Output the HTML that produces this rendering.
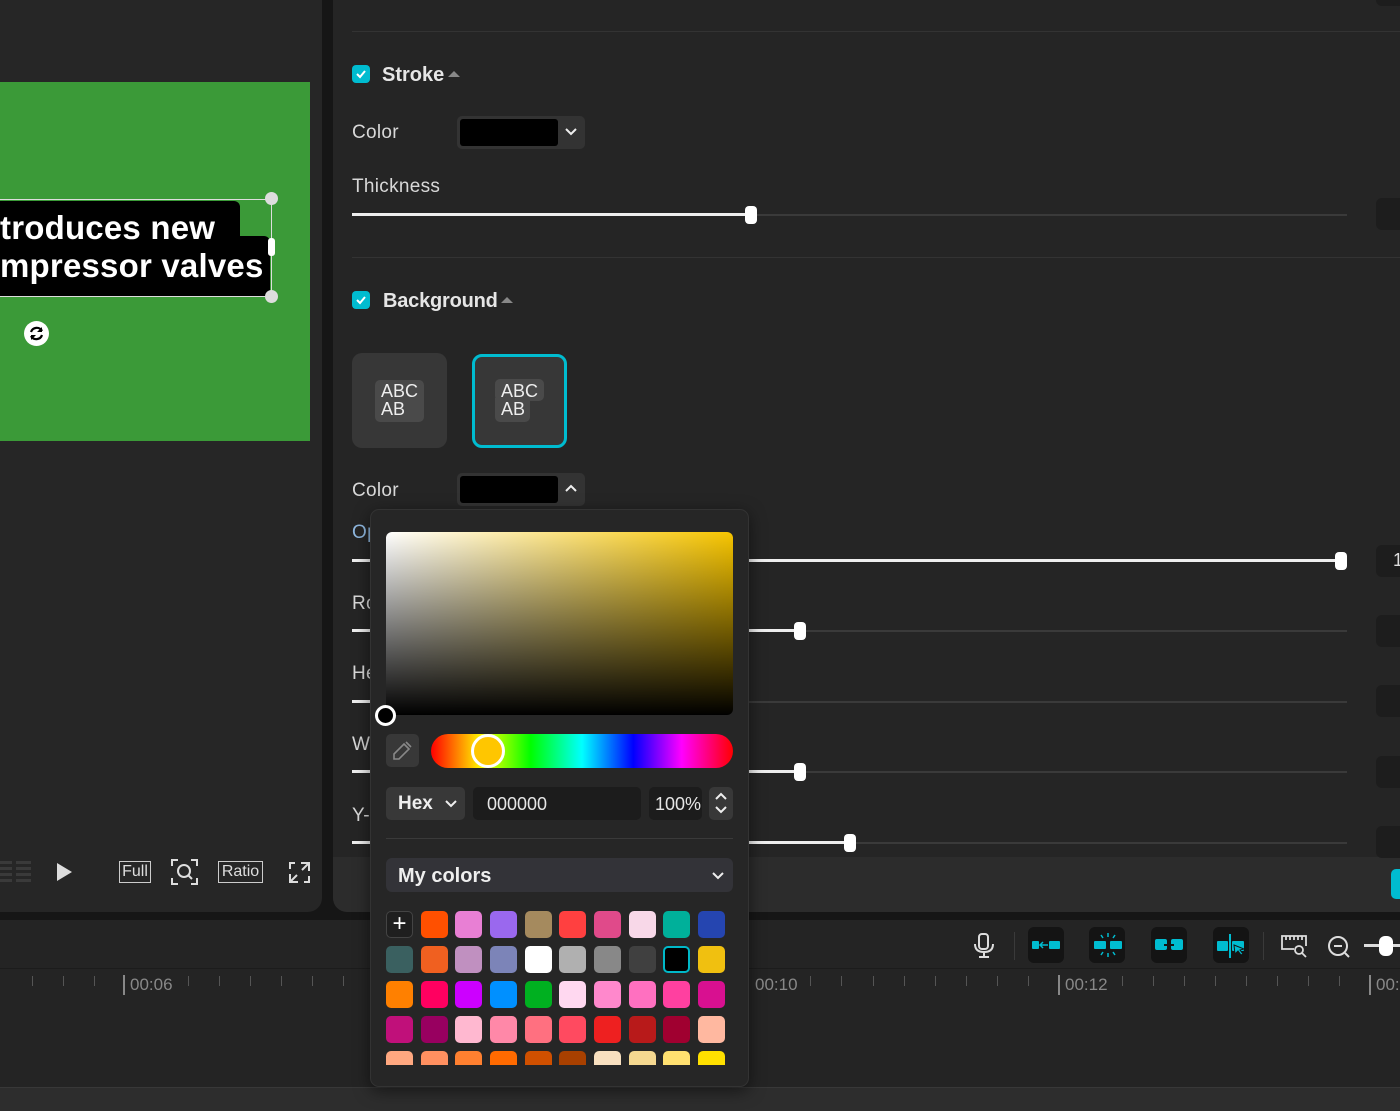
<!DOCTYPE html>
<html><head><meta charset="utf-8"><style>
*{box-sizing:border-box;margin:0;padding:0}
body{width:1400px;height:1111px;background:#161616;position:relative;overflow:hidden;font-family:"Liberation Sans",sans-serif;color:#ddd}
.abs{position:absolute}
.lbl{position:absolute;font-size:19px;color:#d8d8d8;letter-spacing:0.3px}
.track{position:absolute;height:2px;background:#3a3a3a}
.fill{position:absolute;height:3px;background:#eee}
.knob{position:absolute;width:12px;height:18px;background:#fff;border-radius:4px}
.vbox{position:absolute;left:1376px;width:40px;height:32px;background:#1d1d1d;border-radius:6px}
.sw{position:absolute;width:27px;height:27px;border-radius:5px}
.tbtn{position:absolute;top:927px;width:36px;height:36px;background:#141414;border-radius:6px}
.tick{position:absolute;top:976px;width:1px;height:10px;background:#555}
.tl{position:absolute;top:975px;font-size:17px;color:#888;border-left:2px solid #888;padding-left:5px;line-height:20px}
</style></head><body>
<!-- left panel -->
<div class="abs" style="left:0;top:0;width:322px;height:912px;background:#262626;border-radius:0 0 14px 0"></div>
<div class="abs" style="left:0;top:82px;width:310px;height:359px;background:#3b9a38"></div>
<div class="abs" style="left:0;top:201px;width:240px;height:40px;background:#000;border-radius:0 6px 0 0"></div>
<div class="abs" style="left:0;top:236px;width:270px;height:61px;background:#000;border-radius:0 6px 6px 0"></div>
<div class="abs" style="left:0;top:209px;font-size:33px;font-weight:bold;color:#fff;line-height:38px;letter-spacing:0.2px">troduces new<br>mpressor valves</div>
<div class="abs" style="left:0;top:199px;width:272px;height:1px;background:#ddd"></div>
<div class="abs" style="left:0;top:296px;width:272px;height:1px;background:#ddd"></div>
<div class="abs" style="left:271px;top:199px;width:1px;height:98px;background:#ddd"></div>
<div class="abs" style="left:265px;top:192px;width:13px;height:13px;border-radius:50%;background:#ddd"></div>
<div class="abs" style="left:265px;top:290px;width:13px;height:13px;border-radius:50%;background:#ddd"></div>
<div class="abs" style="left:268px;top:238px;width:7px;height:18px;border-radius:3px;background:#fff"></div>
<div class="abs" style="left:24px;top:321px;width:25px;height:25px;border-radius:50%;background:#fff"></div>
<svg class="abs" style="left:24px;top:321px" width="25" height="25" viewBox="0 0 25 25"><path d="M7 11a6 6 0 0 1 11-1M18 14a6 6 0 0 1-11 1" stroke="#000" stroke-width="2.2" fill="none"/><path d="M18 6v5h-5z M7 19v-5h5z" fill="#000"/></svg>
<!-- player controls -->
<svg class="abs" style="left:0;top:860px" width="32" height="24"><g fill="#3a3a3a"><rect x="0" y="1" width="12" height="3"/><rect x="0" y="7" width="12" height="3"/><rect x="0" y="13" width="12" height="3"/><rect x="0" y="19" width="12" height="3"/><rect x="16" y="1" width="15" height="3"/><rect x="16" y="7" width="15" height="3"/><rect x="16" y="13" width="15" height="3"/><rect x="16" y="19" width="15" height="3"/></g></svg>
<svg class="abs" style="left:56px;top:862px" width="18" height="20"><path d="M1 1L16 10L1 19Z" fill="#ddd"/></svg>
<div class="abs" style="left:119px;top:861px;width:32px;height:22px;border:1.5px solid #ccc;font-size:16px;color:#ddd;text-align:center;line-height:19px">Full</div>
<svg class="abs" style="left:171px;top:859px" width="27" height="26" fill="none" stroke="#ddd" stroke-width="2"><path d="M1 7V1h6M20 1h6v6M26 19v6h-6M7 25H1v-6"/><circle cx="13" cy="12" r="6"/><path d="M17 16l4 4"/></svg>
<div class="abs" style="left:218px;top:861px;width:45px;height:22px;border:1.5px solid #ccc;font-size:16px;color:#ddd;text-align:center;line-height:19px">Ratio</div>
<svg class="abs" style="left:289px;top:862px" width="21" height="21" fill="none" stroke="#ddd" stroke-width="2"><path d="M12 1h8v8M20 1l-7 7M9 20H1v-8M1 20l7-7M1 7V1h5M20 14v6h-5"/></svg>
<!-- right panel -->
<div class="abs" style="left:333px;top:0;width:1067px;height:912px;background:#252525;border-radius:0 0 0 14px"></div>
<div class="abs" style="left:333px;top:857px;width:1067px;height:55px;background:#2c2c2c;border-radius:0 0 0 14px"></div>
<div class="abs" style="left:1391px;top:869px;width:20px;height:30px;background:#00bcd0;border-radius:5px"></div>
<div class="abs" style="left:352px;top:31px;width:1048px;height:1px;background:#333"></div>
<div class="abs" style="left:1376px;top:-10px;width:40px;height:16px;background:#1d1d1d;border-radius:6px"></div>
<div class="abs" style="left:352px;top:65px;width:18px;height:18px;background:#00bcd0;border-radius:4px"></div>
<svg class="abs" style="left:352px;top:65px" width="18" height="18"><path d="M5 9l3 3 5-6" stroke="#fff" stroke-width="2" fill="none"/></svg>
<div class="abs" style="left:382px;top:64px;font-size:20px;font-weight:bold;color:#e6e6e6">Stroke</div>
<svg class="abs" style="left:448px;top:70px" width="12" height="8"><path d="M0 7L6 1L12 7Z" fill="#888"/></svg>
<div class="lbl" style="left:352px;top:122px">Color</div>
<div class="abs" style="left:457px;top:116px;width:128px;height:33px;background:#333;border-radius:5px"></div>
<div class="abs" style="left:460px;top:119px;width:98px;height:27px;background:#000;border-radius:3px"></div>
<svg class="abs" style="left:565px;top:127px" width="12" height="9"><path d="M1 2l5 5 5-5" stroke="#eee" stroke-width="2" fill="none"/></svg>
<div class="lbl" style="left:352px;top:176px">Thickness</div>
<div class="track" style="left:352px;top:214px;width:995px"></div>
<div class="fill" style="left:352px;top:213px;width:399px"></div>
<div class="knob" style="left:745px;top:206px"></div>
<div class="vbox" style="top:198px"></div>
<div class="abs" style="left:352px;top:257px;width:1048px;height:1px;background:#333"></div>
<div class="abs" style="left:352px;top:291px;width:18px;height:18px;background:#00bcd0;border-radius:4px"></div>
<svg class="abs" style="left:352px;top:291px" width="18" height="18"><path d="M5 9l3 3 5-6" stroke="#fff" stroke-width="2" fill="none"/></svg>
<div class="abs" style="left:383px;top:290px;font-size:20px;font-weight:bold;color:#e6e6e6;letter-spacing:-0.2px">Background</div>
<svg class="abs" style="left:501px;top:296px" width="12" height="8"><path d="M0 7L6 1L12 7Z" fill="#888"/></svg>
<div class="abs" style="left:352px;top:353px;width:95px;height:95px;background:#373737;border-radius:10px"></div>
<div class="abs" style="left:375px;top:380px;width:49px;height:42px;background:#4a4a4a;border-radius:5px"></div>
<div class="abs" style="left:381px;top:382px;font-size:18px;color:#eee;line-height:18px">ABC<br>AB</div>
<div class="abs" style="left:472px;top:354px;width:95px;height:94px;background:#373737;border:3px solid #00bcd0;border-radius:10px"></div>
<div class="abs" style="left:495px;top:379px;width:49px;height:22px;background:#4a4a4a;border-radius:5px"></div>
<div class="abs" style="left:495px;top:398px;width:35px;height:24px;background:#4a4a4a;border-radius:0 0 5px 5px"></div>
<div class="abs" style="left:501px;top:382px;font-size:18px;color:#eee;line-height:18px">ABC<br>AB</div>
<div class="lbl" style="left:352px;top:480px">Color</div>
<div class="abs" style="left:457px;top:473px;width:128px;height:33px;background:#333;border-radius:5px"></div>
<div class="abs" style="left:460px;top:476px;width:98px;height:27px;background:#000;border-radius:3px"></div>
<svg class="abs" style="left:565px;top:484px" width="12" height="9"><path d="M1 7l5-5 5 5" stroke="#eee" stroke-width="2" fill="none"/></svg>
<div class="lbl" style="left:352px;top:522px;color:#8fb8e0">Op</div>
<div class="lbl" style="left:352px;top:593px">Ro</div>
<div class="lbl" style="left:352px;top:663px">He</div>
<div class="lbl" style="left:352px;top:734px">Wi</div>
<div class="lbl" style="left:352px;top:805px">Y-</div>
<div class="track" style="left:352px;top:560px;width:995px"></div>
<div class="fill" style="left:352px;top:559px;width:989px"></div>
<div class="knob" style="left:1335px;top:552px"></div>
<div class="vbox" style="top:545px"></div>
<div class="abs" style="left:1393px;top:550px;font-size:18px;color:#ddd">1</div>
<div class="track" style="left:352px;top:630px;width:995px"></div>
<div class="fill" style="left:352px;top:629px;width:448px"></div>
<div class="knob" style="left:794px;top:622px"></div>
<div class="vbox" style="top:615px"></div>
<div class="track" style="left:352px;top:701px;width:995px"></div>
<div class="fill" style="left:352px;top:700px;width:20px"></div>
<div class="vbox" style="top:685px"></div>
<div class="track" style="left:352px;top:771px;width:995px"></div>
<div class="fill" style="left:352px;top:770px;width:448px"></div>
<div class="knob" style="left:794px;top:763px"></div>
<div class="vbox" style="top:756px"></div>
<div class="track" style="left:352px;top:842px;width:995px"></div>
<div class="fill" style="left:352px;top:841px;width:498px"></div>
<div class="knob" style="left:844px;top:834px"></div>
<div class="vbox" style="top:826px"></div>
<!-- timeline -->
<div class="abs" style="left:0;top:920px;width:1400px;height:191px;background:#242424"></div>
<div class="abs" style="left:0;top:968px;width:1400px;height:1px;background:#1c1c1c"></div>
<div class="abs" style="left:0;top:1087px;width:1400px;height:24px;background:#2d2d2d;border-top:1px solid #383838"></div>
<svg class="abs" style="left:973px;top:933px" width="22" height="26" fill="none" stroke="#ddd" stroke-width="2"><rect x="6" y="1" width="9" height="15" rx="3"/><path d="M2 11q0 8 9 8q9 0 9-8M11 19v5M6 24h10"/></svg>
<div class="abs" style="left:1014px;top:932px;width:1px;height:28px;background:#3a3a3a"></div>
<div class="tbtn" style="left:1028px"></div>
<svg class="abs" style="left:1031px;top:938px" width="30" height="14" fill="#00bcd0"><rect x="1" y="3" width="7" height="8" rx="1"/><rect x="18" y="3" width="11" height="8" rx="1"/><path d="M10 7h7M12 4l-3 3 3 3" stroke="#00bcd0" stroke-width="1.5" fill="none"/></svg>
<div class="tbtn" style="left:1089px"></div>
<svg class="abs" style="left:1093px;top:932px" width="30" height="26" fill="#00bcd0"><rect x="1" y="9" width="12" height="8" rx="1"/><rect x="17" y="9" width="12" height="8" rx="1"/><path d="M15 1v4M15 21v4M8 3l2 3M22 3l-2 3M8 23l2-3M22 23l-2-3" stroke="#00bcd0" stroke-width="1.5"/></svg>
<div class="tbtn" style="left:1151px"></div>
<svg class="abs" style="left:1154px;top:938px" width="30" height="14" fill="none" stroke="#00bcd0" stroke-width="2"><rect x="2" y="2" width="10" height="9" rx="1" fill="#00bcd0"/><rect x="18" y="2" width="10" height="9" rx="1" fill="#00bcd0"/><path d="M10 7h10" stroke="#141414"/></svg>
<div class="tbtn" style="left:1213px"></div>
<svg class="abs" style="left:1216px;top:933px" width="32" height="26" fill="#00bcd0"><rect x="1" y="8" width="11" height="10" rx="1"/><rect x="16" y="8" width="12" height="10" rx="1"/><rect x="13" y="1" width="2" height="24"/><path d="M18 12l10 4-4 1 3 4-2 1-3-4-3 3z" fill="#00bcd0" stroke="#141414"/></svg>
<div class="abs" style="left:1263px;top:932px;width:1px;height:28px;background:#3a3a3a"></div>
<svg class="abs" style="left:1280px;top:933px" width="28" height="25" fill="none" stroke="#ddd" stroke-width="1.8"><path d="M14 16H2V3h24v10M6 3v4M10 3v4M14 3v4M18 3v4M22 3v4"/><circle cx="19" cy="17" r="4"/><path d="M22 20l4 4"/></svg>
<svg class="abs" style="left:1327px;top:935px" width="24" height="24" fill="none" stroke="#ddd" stroke-width="2"><circle cx="11" cy="11" r="9"/><path d="M7 11h8M18 18l4 4"/></svg>
<div class="abs" style="left:1364px;top:944px;width:36px;height:3px;background:#ddd"></div>
<div class="abs" style="left:1379px;top:936px;width:14px;height:20px;background:#fff;border-radius:6px"></div>
<div class="tick" style="left:32px"></div><div class="tick" style="left:63px"></div><div class="tick" style="left:94px"></div>
<div class="tl" style="left:123px">00:06</div>
<div class="tick" style="left:188px"></div><div class="tick" style="left:219px"></div><div class="tick" style="left:250px"></div><div class="tick" style="left:281px"></div><div class="tick" style="left:312px"></div><div class="tick" style="left:343px"></div>
<div class="abs" style="left:755px;top:975px;font-size:17px;color:#888">00:10</div>
<div class="tick" style="left:810px"></div><div class="tick" style="left:841px"></div><div class="tick" style="left:873px"></div><div class="tick" style="left:904px"></div><div class="tick" style="left:935px"></div><div class="tick" style="left:966px"></div><div class="tick" style="left:997px"></div><div class="tick" style="left:1028px"></div>
<div class="tl" style="left:1058px">00:12</div>
<div class="tick" style="left:1122px"></div><div class="tick" style="left:1153px"></div><div class="tick" style="left:1184px"></div><div class="tick" style="left:1215px"></div><div class="tick" style="left:1246px"></div><div class="tick" style="left:1277px"></div><div class="tick" style="left:1308px"></div><div class="tick" style="left:1339px"></div>
<div class="tl" style="left:1369px">00:</div>
<!-- popup -->
<div class="abs" style="left:370px;top:509px;width:379px;height:578px;background:#262626;border:1px solid #333;border-radius:9px;box-shadow:0 4px 16px rgba(0,0,0,.5)"></div>
<div class="abs" style="left:386px;top:532px;width:347px;height:183px;border-radius:6px;background:linear-gradient(to bottom,rgba(0,0,0,0),#000),linear-gradient(to right,#fff,#f7c500)"></div>
<div class="abs" style="left:375px;top:705px;width:21px;height:21px;border-radius:50%;background:#000;border:3px solid #fff"></div>
<div class="abs" style="left:386px;top:734px;width:33px;height:33px;background:#383838;border-radius:5px"></div>
<svg class="abs" style="left:391px;top:739px" width="23" height="23" fill="none" stroke="#888" stroke-width="1.6"><path d="M15 3l5 5M13 5l5 5-10 10H3v-5z"/></svg>
<div class="abs" style="left:431px;top:734px;width:302px;height:34px;border-radius:17px;background:linear-gradient(to right,#f00,#ff0 17%,#0f0 33%,#0ff 50%,#00f 67%,#f0f 83%,#f00)"></div>
<div class="abs" style="left:471px;top:734px;width:34px;height:34px;border-radius:50%;background:#ffc600;border:3px solid #fff"></div>
<div class="abs" style="left:386px;top:787px;width:79px;height:33px;background:#383838;border-radius:5px"></div>
<div class="abs" style="left:398px;top:793px;font-size:19px;font-weight:bold;color:#eee">Hex</div>
<svg class="abs" style="left:445px;top:800px" width="12" height="8"><path d="M1 1l5 5 5-5" stroke="#eee" stroke-width="2" fill="none"/></svg>
<div class="abs" style="left:473px;top:787px;width:168px;height:33px;background:#1c1c1c;border-radius:5px"></div>
<div class="abs" style="left:487px;top:794px;font-size:18px;color:#e6e6e6">000000</div>
<div class="abs" style="left:649px;top:787px;width:53px;height:33px;background:#1c1c1c;border-radius:5px"></div>
<div class="abs" style="left:655px;top:794px;font-size:18px;color:#e6e6e6">100%</div>
<div class="abs" style="left:709px;top:787px;width:24px;height:33px;background:#383838;border-radius:5px"></div>
<svg class="abs" style="left:713px;top:791px" width="16" height="24" fill="none" stroke="#eee" stroke-width="2"><path d="M3 8l5-5 5 5M3 16l5 5 5-5"/></svg>
<div class="abs" style="left:386px;top:838px;width:347px;height:1px;background:#3a3a3a"></div>
<div class="abs" style="left:386px;top:858px;width:347px;height:34px;background:#333338;border-radius:6px"></div>
<div class="abs" style="left:398px;top:865px;font-size:20px;font-weight:bold;color:#eee">My colors</div>
<svg class="abs" style="left:712px;top:872px" width="12" height="8"><path d="M1 1l5 5 5-5" stroke="#eee" stroke-width="2" fill="none"/></svg>
<div class="abs" style="left:386px;top:911px;width:347px;height:154px;overflow:hidden">
<div class="sw" style="left:0;top:0;border:1px solid #444;background:#1f1f1f;color:#fff;font-size:24px;text-align:center;line-height:24px">+</div>
<div class="sw" style="left:35px;top:0;background:#ff5000"></div>
<div class="sw" style="left:69px;top:0;background:#e87fd4"></div>
<div class="sw" style="left:104px;top:0;background:#9a68ee"></div>
<div class="sw" style="left:139px;top:0;background:#a58a5e"></div>
<div class="sw" style="left:173px;top:0;background:#ff4040"></div>
<div class="sw" style="left:208px;top:0;background:#e04a8a"></div>
<div class="sw" style="left:243px;top:0;background:#f8d8e8"></div>
<div class="sw" style="left:277px;top:0;background:#00b09a"></div>
<div class="sw" style="left:312px;top:0;background:#2545b0"></div>
<div class="sw" style="left:0;top:35px;background:#3a6060"></div>
<div class="sw" style="left:35px;top:35px;background:#f06020"></div>
<div class="sw" style="left:69px;top:35px;background:#c090c0"></div>
<div class="sw" style="left:104px;top:35px;background:#7c84b8"></div>
<div class="sw" style="left:139px;top:35px;background:#fff"></div>
<div class="sw" style="left:173px;top:35px;background:#b0b0b0"></div>
<div class="sw" style="left:208px;top:35px;background:#888"></div>
<div class="sw" style="left:243px;top:35px;background:#404040"></div>
<div class="sw" style="left:277px;top:35px;background:#000;border:2px solid #00b8c8"></div>
<div class="sw" style="left:312px;top:35px;background:#f0c010"></div>
<div class="sw" style="left:0;top:70px;background:#ff8000"></div>
<div class="sw" style="left:35px;top:70px;background:#ff0060"></div>
<div class="sw" style="left:69px;top:70px;background:#cc00ff"></div>
<div class="sw" style="left:104px;top:70px;background:#0090ff"></div>
<div class="sw" style="left:139px;top:70px;background:#00b020"></div>
<div class="sw" style="left:173px;top:70px;background:#ffd8f0"></div>
<div class="sw" style="left:208px;top:70px;background:#ff88cc"></div>
<div class="sw" style="left:243px;top:70px;background:#ff70c0"></div>
<div class="sw" style="left:277px;top:70px;background:#ff40a0"></div>
<div class="sw" style="left:312px;top:70px;background:#d81090"></div>
<div class="sw" style="left:0;top:105px;background:#c0107a"></div>
<div class="sw" style="left:35px;top:105px;background:#980060"></div>
<div class="sw" style="left:69px;top:105px;background:#ffb8d0"></div>
<div class="sw" style="left:104px;top:105px;background:#ff88a8"></div>
<div class="sw" style="left:139px;top:105px;background:#ff7080"></div>
<div class="sw" style="left:173px;top:105px;background:#ff4a60"></div>
<div class="sw" style="left:208px;top:105px;background:#ee2020"></div>
<div class="sw" style="left:243px;top:105px;background:#b81a1a"></div>
<div class="sw" style="left:277px;top:105px;background:#a00030"></div>
<div class="sw" style="left:312px;top:105px;background:#ffb8a0"></div>
<div class="sw" style="left:0;top:140px;background:#ffa880"></div>
<div class="sw" style="left:35px;top:140px;background:#ff9060"></div>
<div class="sw" style="left:69px;top:140px;background:#ff8030"></div>
<div class="sw" style="left:104px;top:140px;background:#ff6a00"></div>
<div class="sw" style="left:139px;top:140px;background:#d05000"></div>
<div class="sw" style="left:173px;top:140px;background:#a84000"></div>
<div class="sw" style="left:208px;top:140px;background:#f8e0c0"></div>
<div class="sw" style="left:243px;top:140px;background:#f5d890"></div>
<div class="sw" style="left:277px;top:140px;background:#ffe070"></div>
<div class="sw" style="left:312px;top:140px;background:#ffe000"></div>
</div>
</body></html>
